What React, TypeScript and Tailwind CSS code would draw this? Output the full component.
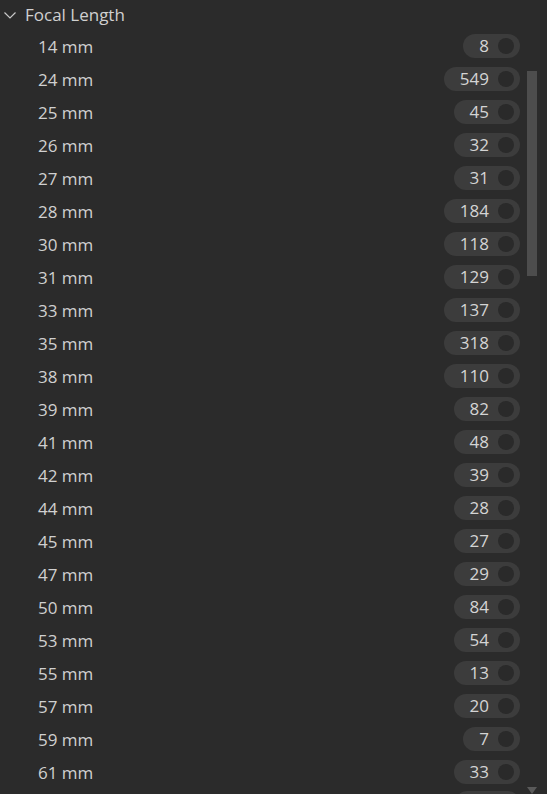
const rows: [string, number][] = [
  ["14 mm", 8],
  ["24 mm", 549],
  ["25 mm", 45],
  ["26 mm", 32],
  ["27 mm", 31],
  ["28 mm", 184],
  ["30 mm", 118],
  ["31 mm", 129],
  ["33 mm", 137],
  ["35 mm", 318],
  ["38 mm", 110],
  ["39 mm", 82],
  ["41 mm", 48],
  ["42 mm", 39],
  ["44 mm", 28],
  ["45 mm", 27],
  ["47 mm", 29],
  ["50 mm", 84],
  ["53 mm", 54],
  ["55 mm", 13],
  ["57 mm", 20],
  ["59 mm", 7],
  ["61 mm", 33],
];

const Chevron = () => (
  <svg width="14" height="14" viewBox="0 0 14 14" className="shrink-0">
    <path d="M1.5 4.5 L7 10 L12.5 4.5" fill="none" stroke="#c8c8c8" strokeWidth="1.2" />
  </svg>
);

const CountPill = ({ count }: { count: number }) => (
  <div className="flex h-[24px] items-center rounded-full bg-[#3c3c3c] pl-[16px] pr-[6px]">
    <span className="text-[17px] leading-none text-[#d4d4d4]">{count}</span>
    <span className="ml-[9px] h-[16px] w-[16px] rounded-full bg-[#2a2a2a]" />
  </div>
);

export default function App() {
  return (
    <div
      className="relative h-[794px] w-[547px] overflow-hidden bg-[#2b2b2b] text-[#d0d0d0]"
      style={{ fontFamily: '"Open Sans", "Noto Sans", sans-serif' }}
    >
      <div className="flex h-[30px] items-center gap-[8px] pl-[3px]">
        <Chevron />
        <span className="text-[17px]">Focal Length</span>
      </div>
      <div className="flex flex-col">
        {rows.map(([label, count]) => (
          <div key={label} className="flex h-[33px] items-center justify-between pl-[38px] pr-[27px]">
            <span className="text-[17px]">{label}</span>
            <div className="-translate-y-[1px]">
              <CountPill count={count} />
            </div>
          </div>
        ))}
        {/* next row, only the top of its pill shows */}
        <div className="flex h-[33px] justify-end pr-[27px] pt-[2px]">
          <div className="h-[24px] w-[65px] rounded-full bg-[#3c3c3c]" />
        </div>
      </div>
      {/* scrollbar */}
      <div className="absolute left-[527px] top-[71px] h-[205px] w-[10px] bg-[#4d4d4d]" />
      <div className="absolute left-[527px] top-[787px] h-0 w-0 border-x-[5px] border-t-[7px] border-x-transparent border-t-[#5a5a5a]" />
    </div>
  );
}
